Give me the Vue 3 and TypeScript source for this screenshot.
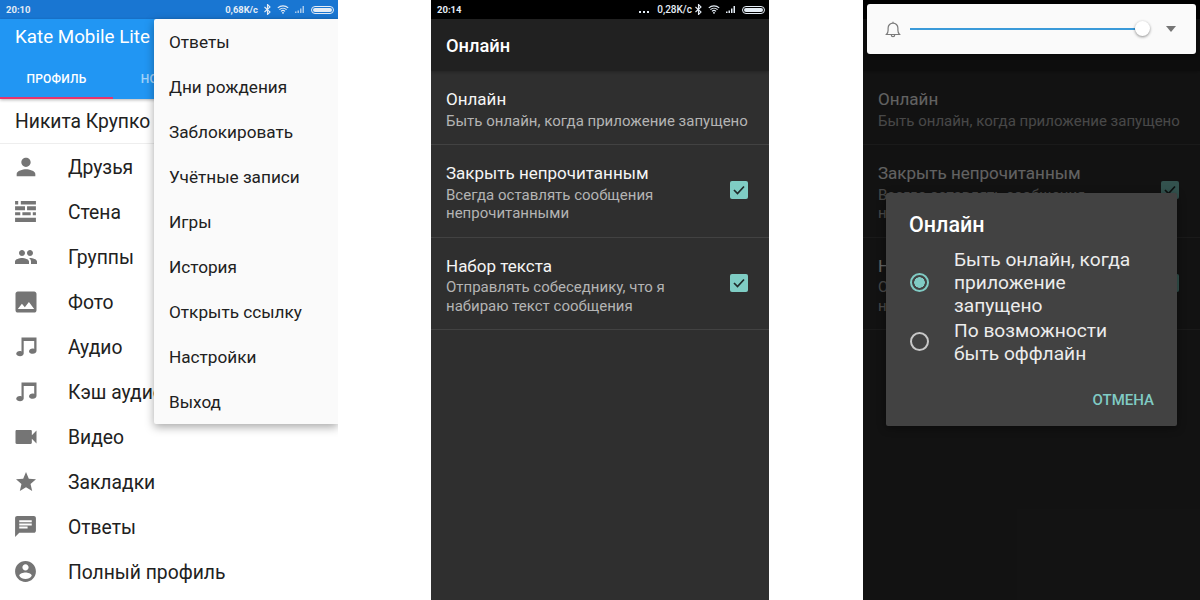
<script setup lang="ts">
type NavItem = { label: string; path: string; size: number }
type Setting = { title: string; sub: string[]; checked: boolean }

const music = 'M7.5 2.5h15V16c0 1.6-1.8 2.8-3.6 2.8S15 17.8 15 16.4c0-1.6 1.8-2.8 3.6-2.8.6 0 1.2.1 1.6.4V6H9.7v12.4c0 1.6-1.8 2.8-3.6 2.8S2.2 20.2 2.2 18.8c0-1.6 1.8-2.8 3.6-2.8.6 0 1.2.1 1.7.4z'

const nav: NavItem[] = [
  { label: 'Друзья', size: 28, path: 'M12 12c2.21 0 4-1.79 4-4s-1.79-4-4-4-4 1.79-4 4 1.79 4 4 4zm0 2c-2.67 0-8 1.34-8 4v2h16v-2c0-2.66-5.33-4-8-4z' },
  { label: 'Стена', size: 25, path: 'M2 2h3v3.2H2zM7.5 2H22v3.2H7.5zM2 7h9.5v3.8H2zM13.5 7H22v3.8h-8.5zM2 12.6h5v3H2zM9 12.6h8v3H9zM19 12.6h3v3h-3zM2 18h20v4H2z' },
  { label: 'Группы', size: 24, path: 'M16 11c1.66 0 2.99-1.34 2.99-3S17.66 5 16 5c-1.66 0-3 1.34-3 3s1.34 3 3 3zm-8 0c1.66 0 2.99-1.34 2.99-3S9.66 5 8 5C6.34 5 5 6.34 5 8s1.34 3 3 3zm0 2c-2.33 0-7 1.17-7 3.5V19h14v-2.5c0-2.33-4.67-3.5-7-3.5zm8 0c-.29 0-.62.02-.97.05 1.16.84 1.97 1.97 1.97 3.45V19h6v-2.5c0-2.33-4.67-3.5-7-3.5z' },
  { label: 'Фото', size: 28, path: 'M21 19V5c0-1.1-.9-2-2-2H5c-1.1 0-2 .9-2 2v14c0 1.1.9 2 2 2h14c1.1 0 2-.9 2-2zM8.5 13.5l2.5 3.01L14.5 12l4.5 6H5l3.5-4.5z' },
  { label: 'Аудио', size: 24, path: music },
  { label: 'Кэш аудио', size: 24, path: music },
  { label: 'Видео', size: 28, path: 'M17 10.5V7c0-.55-.45-1-1-1H4c-.55 0-1 .45-1 1v10c0 .55.45 1 1 1h12c.55 0 1-.45 1-1v-3.5l4 4v-11l-4 4z' },
  { label: 'Закладки', size: 24, path: 'M12 17.27L18.18 21l-1.64-7.03L22 9.24l-7.19-.61L12 2 9.19 8.63 2 9.24l5.46 4.73L5.82 21z' },
  { label: 'Ответы', size: 25, path: 'M20 2H4c-1.1 0-1.99.9-1.99 2L2 22l4-4h14c1.1 0 2-.9 2-2V4c0-1.1-.9-2-2-2zM6 9h12v2H6V9zm8 5H6v-2h8v2zm4-6H6V6h12v2z' },
  { label: 'Полный профиль', size: 25, path: 'M12 2C6.48 2 2 6.48 2 12s4.48 10 10 10 10-4.48 10-10S17.52 2 12 2zm0 3c1.66 0 3 1.34 3 3s-1.34 3-3 3-3-1.34-3-3 1.34-3 3-3zm0 14.2c-2.5 0-4.71-1.28-6-3.22.03-1.99 4-3.08 6-3.08 1.99 0 5.97 1.09 6 3.08-1.29 1.94-3.5 3.22-6 3.22z' },
]

const menu = ['Ответы', 'Дни рождения', 'Заблокировать', 'Учётные записи', 'Игры', 'История', 'Открыть ссылку', 'Настройки', 'Выход']

const settings: Setting[] = [
  { title: 'Онлайн', sub: ['Быть онлайн, когда приложение запущено'], checked: false },
  { title: 'Закрыть непрочитанным', sub: ['Всегда оставлять сообщения', 'непрочитанными'], checked: true },
  { title: 'Набор текста', sub: ['Отправлять собеседнику, что я', 'набираю текст сообщения'], checked: true },
]

const screens = ['second', 'third']
</script>

<template>
  <div class="page">
    <section class="phone light">
      <div class="status blue">
        <span class="time">20:10</span>
        <span class="status-right">
          <span class="speed">0,68K/c</span>
          <svg class="st-icon" width="7" height="11" viewBox="0 0 7 11"><path d="M.5 3l5.5 5-2.5 2.5V.5L6 3 .5 8" fill="none" stroke="currentColor" stroke-width="1.1" /></svg>
          <svg class="st-icon" width="12" height="9" viewBox="0 0 15 11"><path d="M1 3.5a9.5 9.5 0 0 1 13 0M3 5.7a6.6 6.6 0 0 1 9 0M5 7.8a3.6 3.6 0 0 1 5 0" fill="none" stroke="currentColor" stroke-width="1.4" /><circle cx="7.5" cy="9.7" r="1.2" fill="currentColor" /></svg>
          <svg class="st-icon" width="10" height="7" viewBox="0 0 10 7"><path d="M0 5.5h1.5V7H0zM2.5 4.5H4V7H2.5zM5 2.5h1.5V7H5zM7.5 0H9v7H7.5z" fill="currentColor" opacity=".7" /></svg>
          <span class="battery"><i></i></span>
        </span>
      </div>
      <header class="appbar">
        <div class="app-title">Kate Mobile Lite</div>
        <div class="tabs">
          <span class="tab active">ПРОФИЛЬ</span>
          <span class="tab">НОВОСТИ</span>
        </div>
      </header>
      <div class="profile-name">Никита Крупко</div>
      <ul class="nav">
        <li v-for="item in nav" :key="item.label">
          <span class="nav-icon">
            <svg :width="item.size" :height="item.size" viewBox="0 0 24 24"><path :d="item.path" fill="#757575" /></svg>
          </span>
          <span class="nav-label">{{ item.label }}</span>
        </li>
      </ul>
      <ul class="menu">
        <li v-for="entry in menu" :key="entry">{{ entry }}</li>
      </ul>
    </section>

    <section v-for="screen in screens" :key="screen" class="phone dark" :class="screen">
      <div class="status black">
        <span class="time">20:14</span>
        <span class="status-right">
          <span class="dots"><i></i><i></i><i></i></span>
          <span class="speed">0,28K/c</span>
          <svg class="st-icon" width="7" height="11" viewBox="0 0 7 11"><path d="M.5 3l5.5 5-2.5 2.5V.5L6 3 .5 8" fill="none" stroke="currentColor" stroke-width="1.1" /></svg>
          <svg class="st-icon" width="12" height="9" viewBox="0 0 15 11"><path d="M1 3.5a9.5 9.5 0 0 1 13 0M3 5.7a6.6 6.6 0 0 1 9 0M5 7.8a3.6 3.6 0 0 1 5 0" fill="none" stroke="currentColor" stroke-width="1.4" /><circle cx="7.5" cy="9.7" r="1.2" fill="currentColor" /></svg>
          <svg class="st-icon" width="10" height="7" viewBox="0 0 10 7"><path d="M0 5.5h1.5V7H0zM2.5 4.5H4V7H2.5zM5 2.5h1.5V7H5zM7.5 0H9v7H7.5z" fill="currentColor" /></svg>
          <span class="battery"><i></i></span>
        </span>
      </div>
      <header class="dark-bar">Онлайн</header>
      <div
        v-for="row in settings"
        :key="row.title"
        class="setting"
      >
        <div class="setting-text">
          <div class="setting-title">{{ row.title }}</div>
          <div class="setting-subs">
            <div v-for="line in row.sub" :key="line" class="setting-sub">{{ line }}</div>
          </div>
        </div>
        <span v-if="row.checked" class="check">
          <svg width="12" height="10" viewBox="0 0 12 10"><path d="M1 5l3.5 3.5L11 1.5" fill="none" stroke="#1f2b2a" stroke-width="1.7" /></svg>
        </span>
      </div>

      <template v-if="screen === 'third'">
        <div class="scrim"></div>
        <div class="volume">
          <svg width="16" height="17" viewBox="0 0 16 17" class="bell">
            <path d="M1.5 13.5c1-1 1.6-2 1.6-4.2V7a4.9 4.9 0 0 1 9.8 0v2.3c0 2.2.6 3.2 1.6 4.2zM6.3 14a1.7 1.7 0 0 0 3.4 0M8 .8v1.4" fill="none" stroke="#7a7a7a" stroke-width="1.2" />
          </svg>
          <div class="track"><span class="thumb"></span></div>
          <span class="caret"></span>
        </div>
        <div class="dialog">
          <div class="dialog-title">Онлайн</div>
          <div class="option">
            <span class="radio on"></span>
            <span>Быть онлайн, когда<br />приложение<br />запущено</span>
          </div>
          <div class="option">
            <span class="radio"></span>
            <span>По возможности<br />быть оффлайн</span>
          </div>
          <div class="dialog-actions">ОТМЕНА</div>
        </div>
      </template>
    </section>
  </div>
</template>

<style>
html,
body {
  margin: 0;
  background: #fff;
}
</style>

<style scoped>
.page {
  width: 1200px;
  height: 600px;
  display: flex;
  gap: 93px;
  overflow: hidden;
  font-family: Roboto, "Noto Sans", sans-serif;
}

.phone {
  position: relative;
  width: 338px;
  height: 600px;
  flex: none;
  overflow: hidden;
}

.phone.third {
  margin-left: 1px;
  width: 337px;
}

.light {
  background: #fff;
}

.dark {
  background: #2f2f2f;
}

.status {
  height: 19px;
  display: flex;
  align-items: center;
  justify-content: space-between;
  padding: 0 4px 0 6px;
  font-size: 10px;
  font-weight: 500;
  color: #e4ecf5;
}

.time {
  font-size: 9.5px;
  font-weight: 700;
}

.status.blue {
  background: #1976d2;
}

.status.blue .speed {
  font-size: 9.4px;
  font-weight: 700;
}

.status.black {
  background: #000;
}

.status.black .speed {
  margin-right: -3px;
}

.status-right {
  display: flex;
  align-items: center;
  gap: 6px;
}

.dots {
  display: flex;
  gap: 2px;
  margin: 4px 2px 0 0;
}

.dots i {
  width: 2px;
  height: 2px;
  background: currentColor;
}

.st-icon {
  display: block;
}

.battery {
  display: block;
  width: 23px;
  height: 8px;
  box-sizing: border-box;
  border: 1px solid currentColor;
  border-radius: 4px;
  padding: 1px;
}

.battery i {
  display: block;
  height: 100%;
  background: currentColor;
  border-radius: 2px;
}

.appbar {
  height: 80px;
  background: #2196f3;
  position: relative;
  box-shadow: 0 1px 3px rgba(0, 0, 0, 0.3);
}

.app-title {
  padding: 6px 0 0 15px;
  height: 29px;
  font-size: 18.8px;
  line-height: 24px;
  color: #fff;
}

.tabs {
  display: flex;
  margin-top: 11px;
}

.tab {
  width: 113px;
  height: 34px;
  box-sizing: border-box;
  padding-top: 7px;
  text-align: center;
  font-size: 12px;
  font-weight: 500;
  letter-spacing: 0.2px;
  color: rgba(255, 255, 255, 0.6);
}

.tab.active {
  color: #fff;
  border-bottom: 2px solid #e8336d;
}

.profile-name {
  height: 44px;
  line-height: 46px;
  padding-left: 15px;
  font-size: 19.3px;
  color: #212121;
  border-bottom: 1px solid #eee;
}

.nav {
  list-style: none;
  margin: 0;
  padding: 0;
}

.nav li {
  height: 45px;
  display: flex;
  align-items: center;
}

.nav-icon {
  width: 51px;
  display: flex;
  justify-content: center;
  flex: none;
}

.nav-label {
  margin: 2px 0 0 17px;
  font-size: 19.3px;
  color: #212121;
  white-space: nowrap;
}

.menu {
  position: absolute;
  top: 19px;
  right: 0;
  width: 184px;
  margin: 0;
  padding: 0;
  list-style: none;
  background: #fafafa;
  border-radius: 2px 0 0 2px;
  box-shadow: 0 3px 10px rgba(0, 0, 0, 0.35);
}

.menu li {
  height: 45px;
  line-height: 46px;
  padding-left: 15px;
  font-size: 17.2px;
  color: #212121;
}

.dark-bar {
  height: 52px;
  line-height: 54px;
  padding-left: 15px;
  background: #212121;
  color: #fff;
  font-size: 18.3px;
  font-weight: 500;
  box-shadow: 0 1px 3px rgba(0, 0, 0, 0.25);
  position: relative;
}

.setting {
  display: flex;
  align-items: center;
  justify-content: space-between;
  box-sizing: border-box;
  padding: 17px 21px 14px 15px;
  border-bottom: 1px solid #424242;
}

.setting-title {
  font-size: 17px;
  line-height: 23px;
  color: #f5f5f5;
  white-space: nowrap;
}

.setting-subs {
  margin-top: 0.5px;
}

.setting-sub {
  font-size: 15px;
  line-height: 18.5px;
  color: #b4b4b4;
  white-space: nowrap;
}

.check {
  width: 18px;
  height: 18px;
  margin-bottom: 4px;
  border-radius: 2px;
  background: #7fcdc4;
  display: flex;
  align-items: center;
  justify-content: center;
  flex: none;
}

.scrim {
  position: absolute;
  inset: 0;
  background: rgba(0, 0, 0, 0.6);
}

.volume {
  position: absolute;
  top: 4px;
  left: 4px;
  width: 329px;
  height: 50px;
  background: #fafafa;
  border-radius: 3px;
  box-shadow: 0 1px 3px rgba(0, 0, 0, 0.4);
  display: flex;
  align-items: center;
  padding-left: 18px;
  box-sizing: border-box;
}

.bell {
  flex: none;
}

.track {
  position: relative;
  margin-left: 9px;
  width: 225px;
  height: 2px;
  background: #3a9ad9;
  margin-bottom: 1px;
}

.thumb {
  position: absolute;
  right: -15px;
  top: -7px;
  width: 15px;
  height: 15px;
  border-radius: 50%;
  background: #fff;
  box-shadow: 0 1px 3px rgba(0, 0, 0, 0.45);
}

.caret {
  margin-left: 31px;
  border-left: 5px solid transparent;
  border-right: 5px solid transparent;
  border-top: 6px solid #757575;
}

.dialog {
  position: absolute;
  top: 193px;
  left: 23px;
  width: 291px;
  height: 233px;
  box-sizing: border-box;
  background: #424242;
  border-radius: 2px;
  padding: 19px 23px 0;
  color: #ececec;
  box-shadow: 0 2px 8px rgba(0, 0, 0, 0.4);
}

.dialog-title {
  font-size: 21.5px;
  font-weight: 500;
  line-height: 26px;
  color: #fff;
  margin-bottom: 10px;
}

.option {
  display: flex;
  align-items: center;
  font-size: 19.2px;
  line-height: 23px;
  gap: 25px;
  margin-bottom: 2px;
}

.radio {
  flex: none;
  width: 19px;
  height: 19px;
  box-sizing: border-box;
  border: 2px solid #c8c8c8;
  border-radius: 50%;
  margin: 0 0 1px 1px;
}

.radio.on {
  border-color: #80cbc4;
  background: radial-gradient(circle, #80cbc4 0 5px, transparent 5.5px);
}

.dialog-actions {
  text-align: right;
  font-size: 15px;
  font-weight: 500;
  color: #80cbc4;
  margin-top: 26px;
}
</style>
